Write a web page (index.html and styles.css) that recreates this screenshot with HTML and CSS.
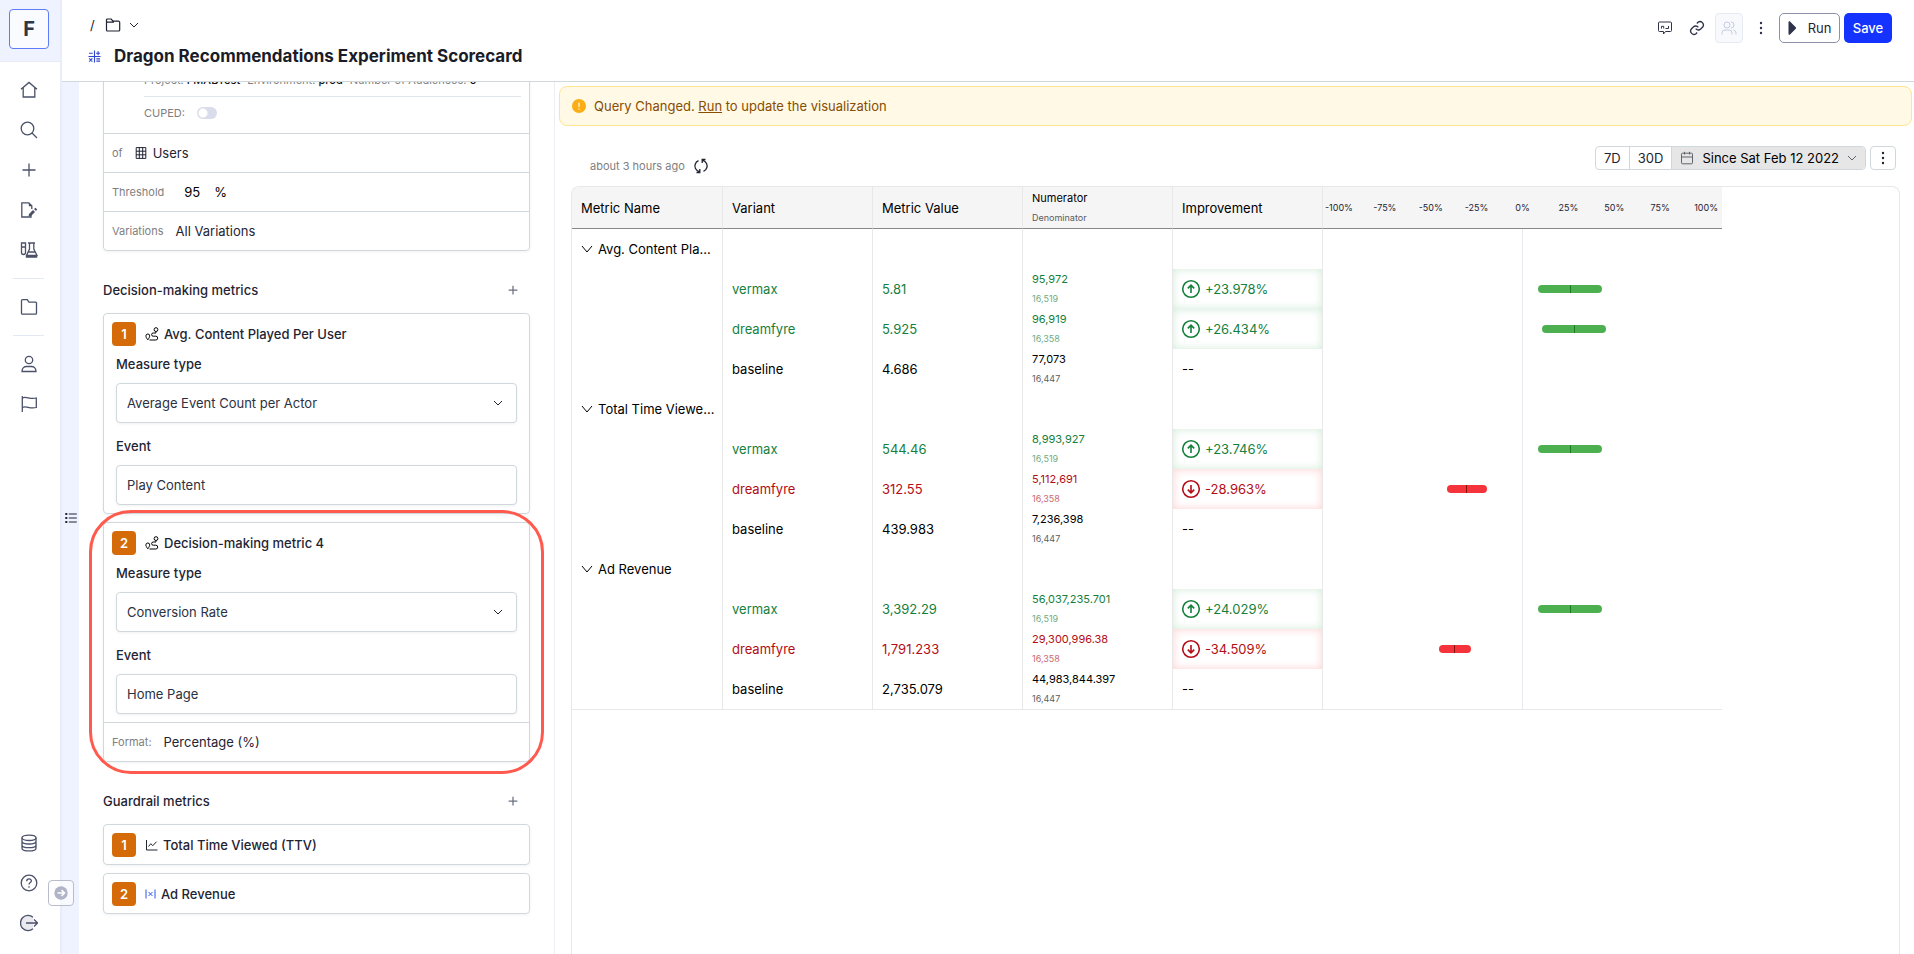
FILE: index.html
```html
<!DOCTYPE html>
<html lang="en">
<head>
	<meta charset="utf-8">
	<title>Dragon Recommendations Experiment Scorecard</title>
	<link rel="stylesheet" href="styles.css">
</head>
<body>
<svg class="defs" aria-hidden="true">
	<symbol id="chevron" viewBox="0 0 10 6"><path d="M1 1l4 4 4-4"/></symbol>
	<symbol id="caret" viewBox="0 0 12 8"><path d="M1 1l5 6 5-6"/></symbol>
	<symbol id="plus" viewBox="0 0 16 16"><path d="M8 1v14M1 8h14"/></symbol>
	<symbol id="dots" viewBox="0 0 4 14"><g fill="currentColor" stroke="none"><circle cx="2" cy="2" r="1.2"/><circle cx="2" cy="7" r="1.2"/><circle cx="2" cy="12" r="1.2"/></g></symbol>
	<symbol id="route" viewBox="0 0 14 14"><circle cx="11" cy="2.600" r="1.900"/><path d="M11 4.600v1.200M11 6H8.200a1.600 1.600 0 0 0 0 3.200h2.600a1.900 1.900 0 0 1 0 3.800H4.500M2.800 12.800C1.600 11.200.9 10 .9 8.900a1.900 1.900 0 0 1 3.800 0c0 1.100-.7 2.300-1.900 3.900z"/></symbol>
	<symbol id="up" viewBox="0 0 20 20"><circle cx="10" cy="10" r="8.300"/><path d="M10 14V6.500M6.800 9.400L10 6.200l3.200 3.200"/></symbol>
	<symbol id="down" viewBox="0 0 20 20"><circle cx="10" cy="10" r="8.300"/><path d="M10 6v7.500M6.800 10.600l3.200 3.200 3.200-3.200"/></symbol>
</svg>
<div class="app">
	<aside class="sidebar">
		<div class="logo-box"><a class="logo" href="#">F</a></div>
		<nav class="nav">
			<a href="#" aria-label="Home"><svg viewBox="0 0 18 18"><path d="M1 8.300L9 1.400l8 6.900M3.200 6.800V16h11.600V6.800"/></svg></a>
			<a href="#" aria-label="Search"><svg viewBox="0 0 18 18"><circle cx="7.500" cy="7.500" r="6.300"/><path d="M12 12l5 5"/></svg></a>
			<a href="#" aria-label="New"><svg viewBox="0 0 18 18"><path d="M9 2.500v13M2.500 9h13"/></svg></a>
			<a href="#" aria-label="Drafts"><svg viewBox="0 0 18 18"><path d="M11 14v2H1.800V1.800h7l3 3V8"/><path d="M8.800 1.800v3.400h3.400zM9 13l4-4 2 2-4 4-2.500.6zM14 8l1.500-1.200L17.200 8.500 16 10z" fill="currentColor" stroke="none"/></svg></a>
			<a href="#" aria-label="Experiments"><svg viewBox="0 0 18 18"><path d="M1.500 2v9.500a2 2 0 0 0 4 0V2zM1.500 6h4M8 2h7M9.500 2v6L6.500 14.500h10.500L13.800 8V2M8.300 11h6.800M6.500 14.500V16h10v-1.500"/></svg></a>
			<hr>
			<a href="#" aria-label="Files"><svg viewBox="0 0 18 18"><path d="M2.500 1.700h4.800l1.600 2.400h6.600a1 1 0 0 1 1 1v10.100a1 1 0 0 1-1 1h-13a1 1 0 0 1-1-1V2.700a1 1 0 0 1 1-1z"/></svg></a>
			<hr>
			<a href="#" aria-label="Users"><svg viewBox="0 0 18 18"><circle cx="9" cy="5" r="3.700"/><path d="M2 16.500c0-3.300 2.300-5 4.600-5h4.800c2.300 0 4.600 1.700 4.600 5z"/></svg></a>
			<a href="#" aria-label="Flags"><svg viewBox="0 0 18 18"><path d="M2.300 1v16M2.300 3c4-2.500 7 2 14 0v9.500c-7 2-10-2.500-14 0"/></svg></a>
			<span class="spacer"></span>
			<a href="#" aria-label="Data"><svg viewBox="0 0 18 18"><ellipse cx="9" cy="3.800" rx="7" ry="2.700"/><path d="M2 3.800v10.400c0 1.500 3 2.700 7 2.700s7-1.200 7-2.700V3.800M2 7.300C2 8.800 5 10 9 10s7-1.200 7-2.700M2 10.900c0 1.500 3 2.700 7 2.700s7-1.200 7-2.700"/></svg></a>
			<a href="#" aria-label="Help"><svg viewBox="0 0 18 18"><circle cx="9" cy="9" r="7.800"/><path d="M6.700 7.200c0-3 4.700-3 4.700-.2C11.400 8.600 9 8.600 9 10.500M9 12.200v1.500"/></svg></a>
			<a href="#" aria-label="Sign out"><svg viewBox="0 0 18 18"><path d="M13 3.200A7.600 7.600 0 1 0 13 14.800" fill="#e9e9ee"/><path d="M6 9h11.500M14 5.500L17.500 9 14 12.500"/></svg></a>
		</nav>
	</aside>
	<button class="expand" aria-label="Expand menu"><svg viewBox="0 0 14 14"><circle cx="7" cy="7" r="6.700" fill="#b0b4c6"/><path d="M3.500 7h7M7.500 4l3 3-3 3" stroke="#fff" stroke-width="1.600" fill="none"/></svg></button>

	<div class="page">
		<header class="header">
			<div>
				<div class="crumbs">
					<span>/</span>
					<svg class="crumb-folder" viewBox="0 0 16 14"><path d="M1.500 4.200V2a1 1 0 0 1 1-1h3.700L8 3.200h5.500a1.200 1.200 0 0 1 1.200 1.200V12a1 1 0 0 1-1 1H2.500a1 1 0 0 1-1-1V4.200H9"/></svg>
					<svg class="chev"><use href="#chevron"/></svg>
				</div>
				<div class="title">
					<svg viewBox="0 0 14 14"><path d="M7 .5v13M.5 7h13M1 3.500h4M8.700 3.500h4.300M10.900 1.400v4.200M1.300 9l3.400 3.600M4.700 9l-3.400 3.600M9 9.500h4M9 12h4"/></svg>
					<h1>Dragon Recommendations Experiment Scorecard</h1>
				</div>
			</div>
			<div class="actions">
				<button class="icon-btn" aria-label="Comments"><svg viewBox="0 0 16 16"><path d="M2.500 2h11a1 1 0 0 1 1 1v7.500a1 1 0 0 1-1 1H8.500L6.500 14v-2.500h-4a1 1 0 0 1-1-1V3a1 1 0 0 1 1-1zM4.500 8.500V6.300h2.200v2.200M8.500 8.500h3V6"/></svg></button>
				<button class="icon-btn" aria-label="Copy link"><svg viewBox="0 0 24 24" stroke-width="2"><path d="M10 13a5 5 0 0 0 7.500.5l3-3a5 5 0 0 0-7-7l-1.700 1.700M14 11a5 5 0 0 0-7.500-.5l-3 3a5 5 0 0 0 7 7l1.700-1.700"/></svg></button>
				<button class="icon-btn share" aria-label="Share" disabled><svg viewBox="0 0 16 16"><circle cx="6" cy="5" r="3"/><path d="M1 14.500v-1.500a3 3 0 0 1 3-3h4a3 3 0 0 1 3 3v1.500M10 2a3 3 0 0 1 0 6M12.500 10a3 3 0 0 1 2.500 3v1.500"/></svg></button>
				<button class="icon-btn" aria-label="More"><svg class="dots"><use href="#dots"/></svg></button>
				<button class="run"><svg viewBox="0 0 8 14"><path d="M.5 1v12c0 1 1 1 1.500.5L7.500 8a1.400 1.400 0 0 0 0-2L2 .5C1.500 0 .5 0 .5 1z"/></svg>Run</button>
				<button class="save">Save</button>
			</div>
		</header>

		<div class="content">
			<div class="strip"><svg viewBox="0 0 12 10"><path d="M3.800 1h8M3.800 5h8M3.800 9h8"/><path d="M.3 1h2M.3 5h2M.3 9h2" stroke-width="2"/></svg></div>

			<section class="panel">
				<div class="card settings">
					<div class="audience">
						<p><span>Project: <b>FMABTest</b></span><span>Environment: <b>prod</b></span><span>Number of Audiences: <b>0</b></span></p>
						<label class="cuped">CUPED: <input type="checkbox"></label>
					</div>
					<div class="row"><span class="muted">of</span><span class="value"><svg class="grid" viewBox="0 0 12 12"><path d="M1.200.6h9.600v10.800H1.200zM1 4.200h10M1 7.800h10M4.300.6v10.800M7.700.6v10.800"/></svg>Users</span></div>
					<div class="row"><label class="muted" for="threshold">Threshold</label><input class="threshold" id="threshold" type="text" value="95"><span class="dark">%</span></div>
					<div class="row"><span class="muted">Variations</span><span class="value">All Variations</span></div>
				</div>

				<div class="section-head">
					<h2>Decision-making metrics</h2>
					<button aria-label="Add decision-making metric"><svg><use href="#plus"/></svg></button>
				</div>
				<div class="cards">
					<div class="card">
						<div class="metric-head"><span class="badge">1</span><svg class="route"><use href="#route"/></svg>Avg. Content Played Per User</div>
						<div class="fields">
							<label for="measure1">Measure type</label>
							<div class="select"><select id="measure1"><option>Average Event Count per Actor</option></select><svg class="chev"><use href="#chevron"/></svg></div>
							<label for="event1">Event</label>
							<input id="event1" type="text" value="Play Content">
						</div>
					</div>
					<div class="card highlighted">
						<div class="metric-head"><span class="badge">2</span><svg class="route"><use href="#route"/></svg>Decision-making metric 4</div>
						<div class="fields">
							<label for="measure2">Measure type</label>
							<div class="select"><select id="measure2"><option>Conversion Rate</option></select><svg class="chev"><use href="#chevron"/></svg></div>
							<label for="event2">Event</label>
							<input id="event2" type="text" value="Home Page">
						</div>
						<div class="row"><span class="muted">Format:</span><span class="value">Percentage (%)</span></div>
					</div>
				</div>

				<div class="section-head">
					<h2>Guardrail metrics</h2>
					<button aria-label="Add guardrail metric"><svg><use href="#plus"/></svg></button>
				</div>
				<div class="cards">
					<div class="card">
						<div class="metric-head"><span class="badge">1</span><svg class="line-icon" viewBox="0 0 13 12"><path d="M1.500 1v10H12.500M3.500 7.500l2.300-2.800 2 2 3.700-4"/></svg>Total Time Viewed (TTV)</div>
					</div>
					<div class="card">
						<div class="metric-head"><span class="badge">2</span><svg class="formula" viewBox="0 0 11 12"><path d="M1 1.500v9M10 1.500v9M3.500 4l4 4M7.500 4l-4 4"/></svg>Ad Revenue</div>
					</div>
				</div>
			</section>

			<main class="main">
				<div class="banner">
					<svg viewBox="0 0 14 14"><circle cx="7" cy="7" r="7" fill="#faad14"/><path d="M7 3.500v4.500M7 9.500v1.200" stroke="#fff6da" stroke-width="1.300"/></svg>
					<span>Query Changed. <a href="#">Run</a> to update the visualization</span>
				</div>
				<div class="toolbar">
					<div class="updated">about 3 hours ago
						<button aria-label="Refresh"><svg viewBox="0 0 16 16"><path d="M6.300 13.600C2.500 12.500 1.200 9 2.200 6.200 2.800 4.400 4 3.300 5.500 2.700M9.700 2.400c3.800 1.100 5.100 4.600 4.100 7.400-.6 1.800-1.800 2.900-3.300 3.500M3.500 14.500h3.300v-3.500M12.500 1.500H9.200V5"/></svg></button>
					</div>
					<div class="range">
						<button>7D</button><button>30D</button><button class="active"><svg class="calendar" viewBox="0 0 14 14"><path d="M2.500 2.200h9a1 1 0 0 1 1 1v8.600a1 1 0 0 1-1 1h-9a1 1 0 0 1-1-1V3.200a1 1 0 0 1 1-1zM1.500 6h11M4.500.8v2.700M9.500.8v2.700"/></svg>Since Sat Feb 12 2022<svg class="chev"><use href="#chevron"/></svg></button>
					</div>
					<button class="menu" aria-label="Options"><svg class="dots"><use href="#dots"/></svg></button>
				</div>
				<div class="results">
					<table>
						<thead>
							<tr>
								<th>Metric Name</th>
								<th>Variant</th>
								<th>Metric Value</th>
								<th><div class="num">Numerator</div><div class="den">Denominator</div></th>
								<th>Improvement</th>
								<th class="chart"><div class="scale"><span>-100%</span><span>-75%</span><span>-50%</span><span>-25%</span><span>0%</span><span>25%</span><span>50%</span><span>75%</span><span>100%</span></div></th>
							</tr>
						</thead>
						<tbody>
							<tr><td><button class="group"><svg class="caret"><use href="#caret"/></svg>Avg. Content Pla...</button></td><td></td><td></td><td></td><td></td><td class="chart"></td></tr>
							<tr class="good"><td></td><td>vermax</td><td>5.81</td><td><div class="num">95,972</div><div class="den">16,519</div></td><td class="change"><div><svg><use href="#up"/></svg>+23.978%</div></td><td class="chart"><div class="bar" style="margin-left:54%;width:16%"></div></td></tr>
							<tr class="good"><td></td><td>dreamfyre</td><td>5.925</td><td><div class="num">96,919</div><div class="den">16,358</div></td><td class="change"><div><svg><use href="#up"/></svg>+26.434%</div></td><td class="chart"><div class="bar" style="margin-left:55%;width:16%"></div></td></tr>
							<tr><td></td><td>baseline</td><td>4.686</td><td><div class="num">77,073</div><div class="den">16,447</div></td><td>--</td><td class="chart"></td></tr>

							<tr><td><button class="group"><svg class="caret"><use href="#caret"/></svg>Total Time Viewe...</button></td><td></td><td></td><td></td><td></td><td class="chart"></td></tr>
							<tr class="good"><td></td><td>vermax</td><td>544.46</td><td><div class="num">8,993,927</div><div class="den">16,519</div></td><td class="change"><div><svg><use href="#up"/></svg>+23.746%</div></td><td class="chart"><div class="bar" style="margin-left:54%;width:16%"></div></td></tr>
							<tr class="bad"><td></td><td>dreamfyre</td><td>312.55</td><td><div class="num">5,112,691</div><div class="den">16,358</div></td><td class="change"><div><svg><use href="#down"/></svg>-28.963%</div></td><td class="chart"><div class="bar" style="margin-left:31%;width:10%"></div></td></tr>
							<tr><td></td><td>baseline</td><td>439.983</td><td><div class="num">7,236,398</div><div class="den">16,447</div></td><td>--</td><td class="chart"></td></tr>

							<tr><td><button class="group"><svg class="caret"><use href="#caret"/></svg>Ad Revenue</button></td><td></td><td></td><td></td><td></td><td class="chart"></td></tr>
							<tr class="good"><td></td><td>vermax</td><td>3,392.29</td><td><div class="num">56,037,235.701</div><div class="den">16,519</div></td><td class="change"><div><svg><use href="#up"/></svg>+24.029%</div></td><td class="chart"><div class="bar" style="margin-left:54%;width:16%"></div></td></tr>
							<tr class="bad"><td></td><td>dreamfyre</td><td>1,791.233</td><td><div class="num">29,300,996.38</div><div class="den">16,358</div></td><td class="change"><div><svg><use href="#down"/></svg>-34.509%</div></td><td class="chart"><div class="bar" style="margin-left:29%;width:8%"></div></td></tr>
							<tr><td></td><td>baseline</td><td>2,735.079</td><td><div class="num">44,983,844.397</div><div class="den">16,447</div></td><td>--</td><td class="chart"></td></tr>
						</tbody>
					</table>
				</div>
			</main>
		</div>
	</div>
</div>
</body>
</html>
```
FILE: styles.css
```css
* {
	box-sizing: border-box;
}
body {
	margin: 0;
	font: 13px/20px Inter, "Liberation Sans", sans-serif;
	color: #1f2433;
	background: #fff;
}
h1, h2, p {
	margin: 0;
}
button, input, select {
	font: inherit;
	color: inherit;
}
button {
	display: flex;
	align-items: center;
	justify-content: center;
	padding: 0;
	border: 0;
	background: none;
}
svg {
	display: block;
	flex: none;
	fill: none;
	stroke: currentColor;
}
.defs {
	position: absolute;
	width: 0;
	height: 0;
}
.chev {
	width: 10px;
	height: 6px;
}
.caret {
	width: 12px;
	height: 8px;
}
.dots {
	width: 4px;
	height: 14px;
}
.app {
	display: flex;
	position: relative;
	height: 100vh;
	overflow: hidden;
}

/* sidebar */
.sidebar {
	display: flex;
	flex-direction: column;
	flex: none;
	width: 62px;
	border-right: 2px solid #e8edf9;
}
.logo-box {
	padding: 9px;
	height: 62px;
	background: #eff2ff;
	border-bottom: 1px solid #e8ebf7;
}
.logo {
	display: flex;
	align-items: center;
	justify-content: center;
	width: 40px;
	height: 40px;
	border: 1px solid #5c7cfa;
	border-radius: 4px;
	background: #fafbff;
	color: #2d3748;
	font-size: 20px;
	font-weight: 700;
	text-decoration: none;
}
.nav {
	display: flex;
	flex-direction: column;
	flex: 1;
	width: 58px;
	padding: 8px 0 11px;
}
.nav a {
	display: flex;
	align-items: center;
	justify-content: center;
	height: 40px;
	color: #4a5169;
}
.nav svg {
	width: 18px;
	height: 18px;
	stroke-width: 1.3;
}
.nav hr {
	width: 31px;
	height: 1px;
	margin: 8px 0 8px 13px;
	border: 0;
	background: #e4e8f4;
}
.spacer {
	flex: 1;
}
.expand {
	position: absolute;
	left: 48px;
	bottom: 48px;
	z-index: 2;
	width: 26px;
	height: 26px;
	border: 1px solid #b9bccb;
	border-radius: 4px;
	background: rgba(255, 255, 255, 0.6);
}
.expand svg {
	width: 14px;
	height: 14px;
	stroke: none;
}

/* header */
.page {
	display: flex;
	flex-direction: column;
	flex: 1;
	min-width: 0;
}
.header {
	display: flex;
	justify-content: space-between;
	flex: none;
	height: 82px;
	padding: 13px 22px 0 26px;
	border-bottom: 1px solid #cfd8dc;
}
.crumbs {
	display: flex;
	align-items: center;
	gap: 8px;
	height: 24px;
	padding-left: 2px;
}
.crumb-folder {
	width: 16px;
	height: 14px;
	margin-left: 2px;
	stroke-width: 1.2;
}
.title {
	display: flex;
	align-items: center;
	gap: 13px;
	margin-top: 7px;
}
.title svg {
	width: 13px;
	height: 13px;
	color: #2f44cc;
	stroke-width: 1.2;
}
.title h1 {
	font-size: 17px;
	line-height: 24px;
	font-weight: 700;
	color: #1a1c28;
}
.actions {
	display: flex;
	align-items: center;
	height: 30px;
	gap: 4px;
}
.icon-btn {
	width: 28px;
	height: 30px;
	color: #2d3348;
}
.icon-btn svg {
	width: 16px;
	height: 16px;
}
.share {
	border: 1px solid #e6eaf3;
	border-radius: 4px;
	background: #f8f9fc;
	color: #c5cbe0;
}
.icon-btn .dots {
	width: 4px;
	height: 14px;
}
.run, .save {
	height: 30px;
	border-radius: 5px;
}
.run {
	gap: 12px;
	width: 61px;
	border: 1px solid #8a91a8;
}
.run svg {
	width: 8px;
	height: 14px;
	fill: #2d3348;
	stroke: none;
}
.save {
	width: 48px;
	background: #1433ff;
	color: #fff;
	font-weight: 500;
}

/* query panel */
.content {
	display: flex;
	flex: 1;
	min-height: 0;
}
.strip {
	display: flex;
	align-items: center;
	justify-content: center;
	flex: none;
	width: 17px;
	background: #eff2ff;
}
.strip svg {
	width: 12px;
	height: 10px;
}
.panel {
	flex: none;
	width: 476px;
	padding: 0 24px;
	border-right: 1px solid #eceef4;
	overflow: hidden;
}
.card {
	border: 1px solid #cfd8dc;
	border-radius: 4px;
	box-shadow: 0 1px 3px rgba(0, 0, 0, 0.06);
}
.settings {
	margin-top: -20px;
	padding-top: 7px;
}
.audience {
	margin: 0 8px 0 40px;
	font-size: 11px;
	color: #808080;
}
.audience p {
	display: flex;
	gap: 7px;
	padding-bottom: 6px;
	border-bottom: 1px solid #dfe7ea;
	white-space: nowrap;
}
.audience b {
	font-weight: 500;
	color: #111;
}
.cuped {
	display: flex;
	align-items: center;
	gap: 12px;
	height: 36px;
	padding-bottom: 4px;
}
.cuped input {
	appearance: none;
	width: 20px;
	height: 12px;
	margin: 0;
	border-radius: 6px;
	background: radial-gradient(circle at 6px 6px, #fff 4px, transparent 5px) #d9ddeb;
}
.row {
	display: flex;
	align-items: center;
	height: 39px;
	gap: 12px;
	padding: 0 8px;
	border-top: 1px solid #cfd8dc;
}
.muted {
	font-size: 11px;
	color: #808080;
}
.value {
	display: flex;
	align-items: center;
	gap: 6px;
}
.dark {
	color: #000;
}
.threshold {
	width: 26px;
	padding: 0 0 0 8px;
	border: 0;
	color: #000;
	background: none;
}
.grid {
	width: 12px;
	height: 12px;
}
.section-head {
	display: flex;
	align-items: center;
	justify-content: space-between;
	padding: 29px 8px 13px 0;
}
.section-head h2 {
	font-size: 13px;
	line-height: 20px;
	font-weight: 500;
}
.section-head button {
	width: 18px;
	height: 20px;
	color: #6b7080;
}
.section-head svg {
	width: 10px;
	height: 10px;
	stroke-width: 2;
}
.cards {
	display: flex;
	flex-direction: column;
	gap: 8px;
}
.metric-head {
	display: flex;
	align-items: center;
	gap: 5px;
	padding: 8px;
	height: 39px;
	font-weight: 500;
}
.badge {
	width: 24px;
	height: 24px;
	margin-right: 4px;
	border-radius: 4px;
	background: #d46b08;
	color: #fff;
	line-height: 25px;
	font-weight: 600;
	text-align: center;
}
.route {
	width: 14px;
	height: 14px;
	color: #000;
}
.line-icon {
	width: 13px;
	height: 12px;
}
.formula {
	width: 11px;
	height: 12px;
	color: #2f54eb;
}
.fields {
	padding: 1px 12px 8px;
}
.fields label {
	display: block;
	margin-bottom: 8px;
	line-height: 21px;
	font-weight: 500;
}
.fields input, .fields select {
	appearance: none;
	display: block;
	width: 100%;
	height: 40px;
	padding: 0 10px;
	border: 1px solid #cfd8dc;
	border-radius: 4px;
	background: #fff;
	color: #2b3142;
	box-shadow: 0 1px 3px rgba(0, 0, 0, 0.06);
}
.select {
	position: relative;
	margin-bottom: 13px;
}
.select .chev {
	position: absolute;
	right: 14px;
	top: 17px;
}
/* call-out ring drawn over the card */
.highlighted {
	position: relative;
}
.highlighted::after {
	content: "";
	position: absolute;
	inset: -13px -15px;
	border: 3px solid #ff5a4d;
	border-radius: 42px;
	pointer-events: none;
}

/* results */
.main {
	display: flex;
	flex-direction: column;
	flex: 1;
	min-width: 0;
}
.banner {
	display: flex;
	align-items: center;
	flex: none;
	gap: 8px;
	height: 40px;
	margin: 4px 2px 0 4px;
	padding: 0 12px;
	border: 1px solid #ffe58f;
	border-radius: 8px;
	background: #fff9e6;
	color: #874d00;
}
.banner svg {
	width: 14px;
	height: 14px;
	stroke: none;
}
.banner a {
	color: inherit;
}
.toolbar {
	display: flex;
	align-items: flex-start;
	flex: none;
	gap: 4px;
	height: 60px;
	padding: 20px 18px 10px 35px;
}
.updated {
	display: flex;
	align-items: center;
	align-self: flex-end;
	gap: 8px;
	margin-right: auto;
	font-size: 11px;
	color: #808080;
}
.updated svg {
	width: 16px;
	height: 16px;
	color: #1f2433;
	stroke-width: 1.3;
}
.range {
	display: flex;
	height: 24px;
	border: 1px solid #cfd8dc;
	border-radius: 4px;
	overflow: hidden;
}
.range button {
	gap: 8px;
	padding: 0 8px;
}
.range button + button {
	border-left: 1px solid #cfd8dc;
}
.range .active {
	background: #e6e6e6;
	color: #000;
}
.range svg {
	color: #60646c;
}
.calendar {
	width: 14px;
	height: 14px;
}
.menu {
	width: 26px;
	height: 24px;
	border: 1px solid #cfd8dc;
	border-radius: 4px;
}
.results {
	flex: 1;
	margin: 0 14px 0 16px;
	border: 1px solid #e8e8e8;
	border-bottom: 0;
	border-radius: 8px 8px 0 0;
	overflow: hidden;
}
table {
	width: 1150px;
	table-layout: fixed;
	border-spacing: 0;
	color: #000;
}
th, td {
	height: 40px;
	padding: 0 0 0 9px;
	border-left: 1px solid #e8e8e8;
	font-weight: 400;
	text-align: left;
	white-space: nowrap;
}
th:first-child, td:first-child {
	border-left: 0;
}
th {
	height: 42px;
	background: #f5f5f5;
	border-bottom: 1px solid #888;
}
tbody tr:last-child td {
	border-bottom: 1px solid #e8e8e8;
}
.num {
	font-size: 11px;
}
.den {
	font-size: 9px;
	opacity: 0.65;
}
.group {
	gap: 5px;
}
.good {
	color: #15803d;
}
.bad {
	color: #b30d15;
}
.change {
	padding: 0;
	box-shadow: inset 0 0 8px rgba(40, 160, 70, 0.22);
}
.bad .change {
	box-shadow: inset 0 0 8px rgba(255, 50, 50, 0.24);
}
.change div {
	display: flex;
	align-items: center;
	gap: 4px;
	padding-left: 8px;
}
.change svg {
	width: 20px;
	height: 20px;
	stroke-width: 1.6;
}
.chart {
	width: 400px;
	padding: 0;
}
td.chart {
	background: linear-gradient(#e8e9f3, #e8e9f3) center / 1px 100% no-repeat;
}
.scale {
	display: grid;
	grid-template-columns: repeat(9, 1fr);
	margin: 0 -7px;
	font-size: 9px;
	text-align: center;
	color: #1f2433;
}
.bar {
	height: 8px;
	border-radius: 4px;
	background: linear-gradient(#237a26, #237a26) center / 1px 100% no-repeat #4caf50;
}
.bad .bar {
	background: linear-gradient(#8c1010, #8c1010) center / 1px 100% no-repeat #f5333a;
}
```
